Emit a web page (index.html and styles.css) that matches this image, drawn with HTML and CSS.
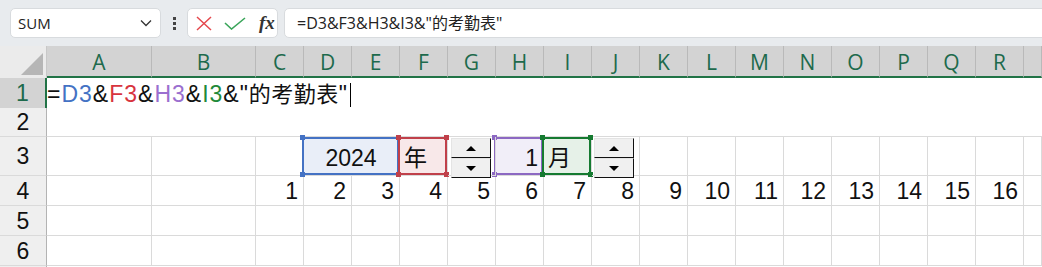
FILE: index.html
```html
<!DOCTYPE html>
<html lang="zh-CN">
<head>
    <meta charset="UTF-8">
    <title>考勤表 - Excel</title>
    <link rel="stylesheet" href="styles.css">
</head>
<body>
    <!-- Formula bar -->
    <div class="toolbar">
        <div class="name-box">
            <span>SUM</span>
            <svg class="chevron" width="12" height="8" viewBox="0 0 12 8"><path d="M1 1.5 L6 6.5 L11 1.5" fill="none" stroke="#333" stroke-width="1.3"/></svg>
        </div>
        <div class="dots"><i></i><i></i><i></i></div>
        <div class="fx-buttons">
            <svg width="16" height="15" viewBox="0 0 16 15"><path d="M1 1 L15 14 M15 1 L1 14" stroke="#e5484d" stroke-width="1.5" fill="none"/></svg>
            <svg width="22" height="13" viewBox="0 0 22 13"><path d="M1 6 L7.5 12 L21 1" stroke="#3aa55a" stroke-width="1.6" fill="none"/></svg>
            <span class="fx">fx</span>
        </div>
        <div class="formula">=D3&amp;F3&amp;H3&amp;I3&amp;"的考勤表"</div>
    </div>

    <!-- Sheet -->
    <div class="sheet">
        <div class="corner"><span class="corner-tri"></span></div>
        <div class="col-head">A</div>
        <div class="col-head">B</div>
        <div class="col-head">C</div>
        <div class="col-head">D</div>
        <div class="col-head">E</div>
        <div class="col-head">F</div>
        <div class="col-head">G</div>
        <div class="col-head">H</div>
        <div class="col-head">I</div>
        <div class="col-head">J</div>
        <div class="col-head">K</div>
        <div class="col-head">L</div>
        <div class="col-head">M</div>
        <div class="col-head">N</div>
        <div class="col-head">O</div>
        <div class="col-head">P</div>
        <div class="col-head">Q</div>
        <div class="col-head">R</div>
        <div class="col-head"></div>

        <!-- row 1 (cell being edited) -->
        <div class="row-head active">1</div>
        <div class="edit-cell">
            =<span class="ref-blue">D3</span>&amp;<span class="ref-red">F3</span>&amp;<span class="ref-purple">H3</span>&amp;<span class="ref-green">I3</span>&amp;"<span class="cjk">的考勤表</span>"<span class="caret"></span>
        </div>
        <div class="row-head">2</div>

        <!-- row 3 -->
        <div class="row-head">3</div>
        <div class="cell"></div>
        <div class="cell"></div>
        <div class="cell"></div>
        <div class="cell box blue span2 center">2024</div>
        <div class="cell box red">年</div>
        <div class="cell spin-cell">
            <div class="spin spin-g"><div class="spin-btn"><span class="up"></span></div><div class="spin-btn"><span class="down"></span></div></div>
        </div>
        <div class="cell box purple num">1</div>
        <div class="cell box green">月</div>
        <div class="cell spin-cell">
            <div class="spin"><div class="spin-btn"><span class="up"></span></div><div class="spin-btn"><span class="down"></span></div></div>
        </div>
        <div class="cell"></div>
        <div class="cell"></div>
        <div class="cell"></div>
        <div class="cell"></div>
        <div class="cell"></div>
        <div class="cell"></div>
        <div class="cell"></div>
        <div class="cell"></div>
        <div class="cell"></div>

        <!-- row 4 -->
        <div class="row-head">4</div>
        <div class="cell"></div>
        <div class="cell"></div>
        <div class="cell num">1</div>
        <div class="cell num">2</div>
        <div class="cell num">3</div>
        <div class="cell num">4</div>
        <div class="cell num">5</div>
        <div class="cell num">6</div>
        <div class="cell num">7</div>
        <div class="cell num">8</div>
        <div class="cell num">9</div>
        <div class="cell num">10</div>
        <div class="cell num">11</div>
        <div class="cell num">12</div>
        <div class="cell num">13</div>
        <div class="cell num">14</div>
        <div class="cell num">15</div>
        <div class="cell num">16</div>
        <div class="cell"></div>

        <!-- row 5 -->
        <div class="row-head">5</div>
        <div class="cell"></div><div class="cell"></div><div class="cell"></div><div class="cell"></div>
        <div class="cell"></div><div class="cell"></div><div class="cell"></div><div class="cell"></div>
        <div class="cell"></div><div class="cell"></div><div class="cell"></div><div class="cell"></div>
        <div class="cell"></div><div class="cell"></div><div class="cell"></div><div class="cell"></div>
        <div class="cell"></div><div class="cell"></div><div class="cell"></div>

        <!-- row 6 -->
        <div class="row-head">6</div>
        <div class="cell"></div><div class="cell"></div><div class="cell"></div><div class="cell"></div>
        <div class="cell"></div><div class="cell"></div><div class="cell"></div><div class="cell"></div>
        <div class="cell"></div><div class="cell"></div><div class="cell"></div><div class="cell"></div>
        <div class="cell"></div><div class="cell"></div><div class="cell"></div><div class="cell"></div>
        <div class="cell"></div><div class="cell"></div><div class="cell"></div>

        <div class="row-head tail"></div>
    </div>
</body>
</html>
```

FILE: styles.css
```css
/* Reset */
* {
    margin: 0;
    padding: 0;
    box-sizing: border-box;
}
body {
    font-family: 'Liberation Sans', 'Noto Sans CJK SC', sans-serif;
    background: #fff;
    color: #111;
    width: 1042px;
    height: 267px;
    overflow: hidden;
}

/* Formula bar */
.toolbar {
    height: 46px;
    background: #e8ebee;
    display: flex;
    align-items: flex-start;
    padding: 8px 0 0 10px;
}
.name-box {
    width: 151px;
    height: 30px;
    background: #fff;
    border: 1px solid #d8dbde;
    border-radius: 5px;
    display: flex;
    align-items: center;
    justify-content: space-between;
    padding: 0 8px 0 7px;
    font-family: 'Open Sans', sans-serif;
    font-size: 15px;
    color: #222;
}
.dots {
    width: 26px;
    height: 30px;
    display: flex;
    flex-direction: column;
    align-items: center;
    justify-content: center;
    gap: 2px;
}
.dots i {
    width: 3px;
    height: 3px;
    background: #444;
}
.fx-buttons {
    width: 91px;
    height: 30px;
    background: #fff;
    border: 1px solid #d8dbde;
    border-radius: 5px;
    display: flex;
    align-items: center;
    padding-left: 8px;
    gap: 12px;
}
.fx {
    font-family: 'Liberation Serif', serif;
    font-style: italic;
    font-weight: bold;
    font-size: 19px;
    color: #333;
    margin-left: 1px;
}
.formula {
    flex: 1;
    height: 30px;
    margin-left: 6px;
    margin-right: -8px;
    background: #fff;
    border: 1px solid #d8dbde;
    border-radius: 5px;
    padding-left: 12px;
    line-height: 28px;
    font-family: 'Open Sans', 'Noto Sans CJK SC', sans-serif;
    font-size: 16px;
    color: #222;
}

/* Grid */
.sheet {
    display: grid;
    grid-template-columns: 47px 105px 104px repeat(16, 48px) 1fr;
    grid-template-rows: 32px 30px 29px 39px 30px 30px 30px 1px;
}
.corner {
    background: #ebebeb;
    border-right: 1px solid #c8c8c8;
    display: flex;
    justify-content: flex-end;
    align-items: flex-end;
    padding: 0 3px 3px 0;
}
.corner-tri {
    width: 0;
    height: 0;
    border-left: 22px solid transparent;
    border-bottom: 22px solid #b6b6b6;
}
.col-head {
    background: #d3d3d3;
    border-right: 1px solid #b9b9b9;
    border-bottom: 2px solid #217346;
    display: flex;
    align-items: center;
    justify-content: center;
    font-family: 'Open Sans', sans-serif;
    font-size: 21px;
    color: #1d6a4c;
    padding-top: 1px;
}
.row-head {
    background: #efefef;
    border-right: 1px solid #b3b3b3;
    border-bottom: 1px solid #dadada;
    display: flex;
    align-items: center;
    justify-content: center;
    font-size: 23px;
    color: #111;
    padding-top: 1px;
}
.row-head.active {
    background: #d3d3d3;
    color: #1d6a4c;
    border-right: 2px solid #217346;
    border-bottom: none;
}
.row-head.tail {
    border-bottom: none;
}
.edit-cell {
    grid-column: 2 / -1;
    grid-row: 2 / 4;
    background: #fff;
    border-bottom: 1px solid #dadada;
    font-size: 23px;
    letter-spacing: 1px;
    line-height: 30px;
    padding-top: 1px;
    white-space: nowrap;
}
.cjk {
    font-size: 22px;
    letter-spacing: 0.5px;
}
.ref-blue { color: #4472c4; }
.ref-red { color: #d8343e; }
.ref-purple { color: #9b6fcf; }
.ref-green { color: #1f8a3a; }
.caret {
    display: inline-block;
    width: 1px;
    height: 24px;
    background: #000;
    vertical-align: -5px;
    margin-left: 2px;
}

.cell {
    position: relative;
    border-right: 1px solid #dadada;
    border-bottom: 1px solid #dadada;
    display: flex;
    align-items: flex-end;
    font-size: 23px;
    line-height: 23px;
    padding: 0 5px 2px 4px;
    white-space: nowrap;
}
.num {
    justify-content: flex-end;
}
.center {
    justify-content: center;
}
.span2 {
    grid-column: span 2;
}

/* highlighted reference ranges */
.box {
    padding-bottom: 5px;
    z-index: 1;
}
.box::before {
    content: "";
    position: absolute;
    top: 0;
    left: -2px;
    right: 0;
    bottom: 0;
    border: 2px solid var(--c);
    background: var(--bg);
    z-index: -1;
}
.box::after {
    content: "";
    position: absolute;
    top: -2px;
    left: -4px;
    right: -2px;
    bottom: -2px;
    background:
        linear-gradient(var(--c), var(--c)) left top / 5px 5px no-repeat,
        linear-gradient(var(--c), var(--c)) right top / 5px 5px no-repeat,
        linear-gradient(var(--c), var(--c)) left bottom / 5px 5px no-repeat,
        linear-gradient(var(--c), var(--c)) right bottom / 5px 5px no-repeat;
}
.blue { --c: #4472c4; --bg: #e9eef8; }
.red { --c: #c0404a; --bg: #f8e8e9; }
.purple { --c: #8c68c2; --bg: #f1eef8; }
.green { --c: #157a30; --bg: #e6f1e8; }
.red, .green {
    padding-left: 4px;
}

/* spin buttons */
.spin-cell {
    z-index: 2;
}
.spin {
    position: absolute;
    top: 1px;
    left: 2px;
    width: 40px;
    height: 40px;
    display: flex;
    flex-direction: column;
}
.spin-g {
    left: 3px;
}
.spin-btn {
    flex: 1;
    background: #f0f0f0;
    border-top: 1px solid #e4e4e4;
    border-left: 1px solid #e4e4e4;
    border-right: 1px solid #111;
    border-bottom: 1px solid #111;
    display: flex;
    align-items: center;
    justify-content: center;
}
.up {
    border-left: 5px solid transparent;
    border-right: 5px solid transparent;
    border-bottom: 5px solid #000;
}
.down {
    border-left: 5px solid transparent;
    border-right: 5px solid transparent;
    border-top: 5px solid #000;
}
```
